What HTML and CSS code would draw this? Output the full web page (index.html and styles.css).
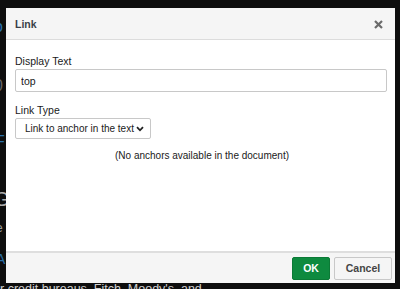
FILE: index.html
```html
<!DOCTYPE html>
<html lang="en">
<head>
    <meta charset="UTF-8">
    <title>Link</title>
    <link rel="stylesheet" href="styles.css">
</head>
<body>
    <div class="page">
        <p class="bg-line bg-o">o</p>
        <p class="bg-line bg-zero">0</p>
        <p class="bg-line bg-f">F</p>
        <p class="bg-line bg-g">G</p>
        <p class="bg-line bg-ke">ke</p>
        <p class="bg-line bg-a">A</p>
        <p class="bg-line bg-last">r credit bureaus, Fitch, Moody's, and</p>
    </div>

    <div class="dialog">
        <div class="dialog-header">
            <h2>Link</h2>
            <svg class="close" width="9" height="9" viewBox="0 0 9 9"><path d="M1 1 L8 8 M8 1 L1 8" stroke="#6b6b6b" stroke-width="2.2"/></svg>
        </div>

        <div class="dialog-body">
            <label for="display_text">Display Text</label>
            <input type="text" id="display_text" value="top">

            <label for="link_type">Link Type</label>
            <div class="select-box">
                <span>Link to anchor in the text</span>
                <svg width="8" height="6" viewBox="0 0 8 6"><path d="M1 1.2 L4 4.3 L7 1.2" fill="none" stroke="#222" stroke-width="1.8"/></svg>
            </div>

            <p class="note">(No anchors available in the document)</p>
        </div>

        <div class="dialog-footer">
            <button type="button" class="ok">OK</button>
            <button type="button" class="cancel">Cancel</button>
        </div>
    </div>
</body>
</html>
```
FILE: styles.css
```css
* {
    margin: 0;
    padding: 0;
    box-sizing: border-box;
}

body {
    font-family: 'Liberation Sans', Arial, sans-serif;
    width: 400px;
    height: 289px;
    background: #0e0e0e;
    overflow: hidden;
    position: relative;
}

/* page behind the dialog, mostly hidden */
.page {
    display: flex;
    flex-direction: column;
    padding-top: 19px;
    font-size: 16px;
}

.bg-line {
    height: 16px;
    line-height: 16px;
    color: #c8c8c8;
    white-space: nowrap;
}

.bg-o { color: #2a6fa8; margin-left: -6px; }
.bg-zero { margin-top: 43px; margin-left: -6px; color: #666; }
.bg-f { margin-top: 40px; margin-left: -5px; color: #2a6fa8; }
.bg-g { margin-top: 41px; margin-left: -6px; font-size: 20px; color: #aaa; }
.bg-ke { margin-top: 13px; margin-left: -11px; font-size: 13px; color: #999; }
.bg-a { margin-top: 15px; margin-left: -4px; color: #2a6fa8; font-size: 14px; }
.bg-last { margin-top: 14px; font-size: 12.5px; color: #cfcfcf; }

.dialog {
    position: absolute;
    left: 6px;
    top: 8px;
    width: 389px;
    height: 275px;
    background: #fff;
    display: flex;
    flex-direction: column;
}

.dialog-header {
    height: 32px;
    background: #f5f5f5;
    border-bottom: 1px solid #dcdcdc;
    display: flex;
    align-items: center;
    justify-content: space-between;
    padding: 1px 12px 0 9px;
}

.dialog-header h2 {
    font-size: 10.5px;
    font-weight: bold;
    color: #3a3f48;
}

.dialog-body {
    flex: 1;
    padding: 15px 8px 0 9px;
    display: flex;
    flex-direction: column;
    align-items: flex-start;
}

label {
    font-size: 10.5px;
    color: #1a1a1a;
    line-height: 13px;
    margin-bottom: 1px;
}

input[type="text"] {
    width: 100%;
    height: 23px;
    border: 1px solid #c8c8c8;
    border-radius: 2px;
    padding: 0 5px;
    font-family: inherit;
    font-size: 10.5px;
    color: #1a1a1a;
    margin-bottom: 12px;
    outline: none;
}

.select-box {
    width: 136px;
    height: 21px;
    border: 1px solid #c8c8c8;
    border-radius: 2px;
    display: flex;
    align-items: center;
    justify-content: space-between;
    padding: 0 6px 0 9px;
    font-size: 10px;
    color: #1a1a1a;
    white-space: nowrap;
}

.note {
    align-self: center;
    font-size: 10px;
    line-height: 13px;
    color: #1a1a1a;
    margin-top: 10px;
    margin-left: 2px;
}

.dialog-footer {
    height: 32px;
    background: #f5f5f5;
    border-top: 2px solid #dedede;
    display: flex;
    justify-content: flex-end;
    align-items: center;
    gap: 4px;
    padding: 0 3px 0 0;
}

button {
    height: 23px;
    font-family: inherit;
    font-size: 10.5px;
    font-weight: bold;
    border-radius: 2px;
}

.ok {
    width: 38px;
    background: #0e8a3f;
    border: 1px solid #0b7a36;
    color: #fff;
}

.cancel {
    width: 58px;
    background: #f5f5f5;
    border: 1px solid #c8c8c8;
    color: #444;
}
```
